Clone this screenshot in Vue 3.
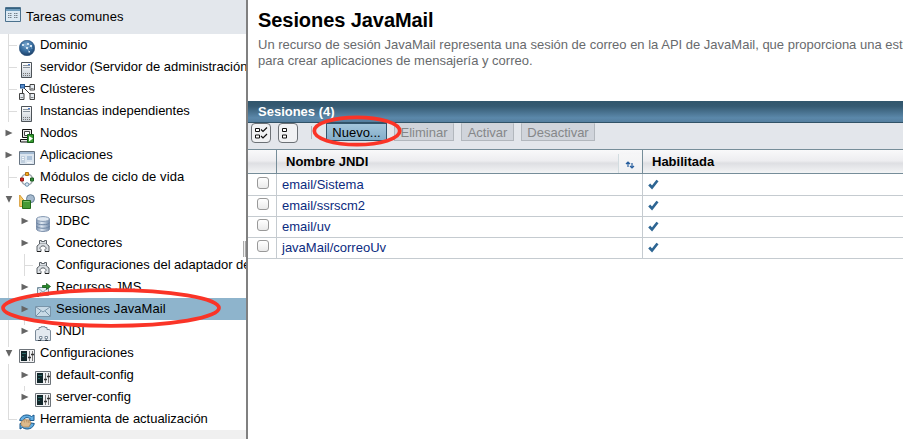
<script setup>
const tree = [
  { label: 'Dominio', icon: 'globe', track: 'tee' },
  { label: 'servidor (Servidor de administración)', icon: 'server', track: 'tee' },
  { label: 'Clústeres', icon: 'cluster', track: 'tee' },
  { label: 'Instancias independientes', icon: 'server', track: 'tee' },
  { label: 'Nodos', icon: 'node', arrow: 'right' },
  { label: 'Aplicaciones', icon: 'apps', arrow: 'right' },
  { label: 'Módulos de ciclo de vida', icon: 'cycle', track: 'tee', wide: true },
  { label: 'Recursos', icon: 'resources', arrow: 'down' },
  { label: 'JDBC', icon: 'database', arrow: 'right', child: true },
  { label: 'Conectores', icon: 'connector', arrow: 'right', child: true },
  { label: 'Configuraciones del adaptador de recursos', icon: 'connector', track: 'tee', child: true },
  { label: 'Recursos JMS', icon: 'jms', arrow: 'right', child: true, wide: true },
  { label: 'Sesiones JavaMail', icon: 'mail', arrow: 'right', child: true, selected: true, wide: true },
  { label: 'JNDI', icon: 'jndi', arrow: 'right', track: 'stub', child: true },
  { label: 'Configuraciones', icon: 'config', arrow: 'down', track: 'stub' },
  { label: 'default-config', icon: 'config', arrow: 'right', child: true },
  { label: 'server-config', icon: 'config', arrow: 'right', track: 'stub', child: true },
  { label: 'Herramienta de actualización', icon: 'update', track: 'end' },
]
const sessions = ['email/Sistema', 'email/ssrscm2', 'email/uv', 'javaMail/correoUv']
</script>

<template>
  <div class="page">
    <svg class="defs" width="0" height="0" aria-hidden="true">
      <defs>
        <radialGradient id="g-globe" cx=".45" cy=".3" r=".7">
          <stop offset="0" stop-color="#79a7cf" /><stop offset=".6" stop-color="#356a9c" /><stop offset="1" stop-color="#1c3f66" />
        </radialGradient>
        <linearGradient id="g-grey" x2="0" y2="1"><stop stop-color="#fff" /><stop offset="1" stop-color="#c5cdd5" /></linearGradient>
        <linearGradient id="g-db"><stop stop-color="#7d93b0" /><stop offset=".4" stop-color="#e0e9f3" /><stop offset="1" stop-color="#7088a8" /></linearGradient>
        <symbol id="i-globe" viewBox="0 0 16 16">
          <circle cx="8" cy="8" r="7.7" fill="url(#g-globe)" stroke="#264d78" stroke-width=".6" />
          <path d="M4 4.8 9 3.8 12 6 8 8.2 10.5 12M8 8.2 4 4.8M12 6l1 3" fill="none" stroke="#8eb6d5" stroke-width=".6" />
          <path d="M3 4h2v2H3zM8 3h2v2H8zM11 5h2v2h-2zM7 7h2v2H7zM9.5 11h1.5v1.5H9.5z" fill="#d3e4f2" />
        </symbol>
        <symbol id="i-server" viewBox="0 0 16 16">
          <path d="M2.5.5h10v15h-10z" fill="url(#g-grey)" stroke="#4d5358" />
          <path d="M4 3.5h7M4 5.5h7" stroke="#87929c" /><path d="M9 2.5h2" stroke="#4d7bd0" />
          <path d="M4 11.5h7M4 13.5h7" stroke="#777" stroke-dasharray="1 1" />
        </symbol>
        <symbol id="i-cluster" viewBox="0 0 16 16">
          <path d="M5 2.5h6M3.5 5v5M5 4l6 6" fill="none" stroke="#333" />
          <rect x="1.5" y=".5" width="4" height="3.5" fill="#588dce" stroke="#24558e" />
          <path d="M11 .5h4.5V6H11zM.5 9.5h4.500v6H.5zM11 9.500h4.500v6H11z" fill="#e7edf3" stroke="#444" />
          <path d="M12 4.5h2.500M1.500 13.500H4M12 13.500h2.500" stroke="#888" />
        </symbol>
        <symbol id="i-node" viewBox="0 0 16 16">
          <path d="M3.5 1.5h9v8h-9zM1.500 11.500h11v2.500h-11z" fill="#e8e8e8" stroke="#111" />
          <path d="M5.500 3.500h5v4h-5z" fill="#fff" stroke="#444" />
          <path d="M8.500 6.500h6v8h-6z" fill="#34992e" stroke="#145a17" />
          <path d="m10 8 4 2.500-4 3z" fill="#fff" />
        </symbol>
        <symbol id="i-apps" viewBox="0 0 16 16">
          <path d="M.5 1.5h15v13H.5z" fill="#dbe5ef" stroke="#687583" /><path d="M1 2h14v2H1z" fill="#a3bad2" />
          <path d="M2 6h4v7H2z" fill="#c0cfde" /><path d="M8 6h5v4H8z" fill="#adc3da" /><path d="M3 7.5h2M3 9.5h2M8 12.5h5" stroke="#f5f8fb" />
        </symbol>
        <symbol id="i-cycle" viewBox="0 0 16 16">
          <circle cx="8" cy="7.5" r="5.5" fill="none" stroke="#a0a6ac" stroke-width="1.4" />
          <path d="M6.500.5h3v3h-3z" fill="#f0ae20" stroke="#b56e10" /><path d="M1.500 6h3v3h-3z" fill="#d72b26" stroke="#9b1c18" />
          <path d="M11.500 6h3v3h-3z" fill="#338a38" stroke="#1f6023" /><circle cx="8" cy="12.500" r="1.800" fill="#dbe9f4" stroke="#6c91ae" />
        </symbol>
        <symbol id="i-resources" viewBox="0 0 16 16">
          <path d="M.7 1v11.5H10z" fill="#f9cf71" stroke="#d49830" /><circle cx="11.5" cy="4.700" r="4" fill="#a6bace" stroke="#657e96" />
          <path d="M3.500 6.500h8v8h-8z" fill="#459b35" stroke="#226b19" /><path d="M4.500 7.500h6" stroke="#79bf67" />
        </symbol>
        <symbol id="i-database" viewBox="0 0 16 16">
          <path d="M1.500 3v10c0 3.300 13 3.300 13 0V3" fill="url(#g-db)" stroke="#8093ad" />
          <ellipse cx="8" cy="3" rx="6.500" ry="2.400" fill="#e0e8f1" stroke="#8296b0" />
          <path d="M1.500 6.500c0 3 13 3 13 0m-13 3.500c0 3 13 3 13 0" fill="none" stroke="#6c84a3" />
        </symbol>
        <symbol id="i-connector" viewBox="0 0 16 16">
          <path d="M4.500 6V2.500h2v1h3v-1h2V6l2.500 2v5.500h-4v-2l1-1c0-3.500-6-3.500-6 0l1 1v2H2V8z" fill="#dce0e4" stroke="#5c6268" />
          <path d="M5 5.500h6" stroke="#aab0b5" /><path d="M2 13.500h4M10 13.500h4" stroke="#222" />
        </symbol>
        <symbol id="i-jms" viewBox="0 0 16 16">
          <path d="M2.500 5.500h11v8h-11z" fill="#e2edf4" stroke="#77909f" /><path d="m3 6 5 4 5-4M3 13l3.500-3.500M13 13 9.500 9.500" fill="none" stroke="#93a9b8" />
          <path d="M7.500 3.500h4v-2l4 3-4 3v-2h-4z" fill="#288c2c" stroke="#155b18" stroke-width=".8" /><path d="M2 14h2" stroke="#278929" stroke-width="2" />
        </symbol>
        <symbol id="i-mail" viewBox="0 0 16 16">
          <path d="M.5 2.500h15v10H.5z" fill="#c8dae7" stroke="#7894a9" /><path d="m1 3 7 5 7-5M1 12l5-5M15 12l-5-5" fill="none" stroke="#7895aa" />
        </symbol>
        <symbol id="i-jndi" viewBox="0 0 16 16">
          <path d="M.5 4.500 2 3.500h2v-2h2V.7h4v.8h2v2h2l1.500 1v10h-4v-2h1v-2h-2.500v2h1v2h-5v-2h1v-2H4.500v2h1v2h-5z" fill="#e3e9ef" stroke="#7b8a98" />
          <path d="M3 14.500h3M10 14.500h3" stroke="#303943" />
        </symbol>
        <symbol id="i-config" viewBox="0 0 16 16">
          <path d="M.5 1.500h15v13H.5z" fill="#f0f1f3" stroke="#6d7379" /><path d="M2 3h6v10H2z" fill="#12262a" />
          <path d="M3 5.500h4M3 8.500h2" stroke="#2b6864" /><path d="M10.500 3v10M13.500 3v10" stroke="#777" /><path d="M9 9.500h3M12 6.500h3" stroke="#333" stroke-width="1.5" />
        </symbol>
        <symbol id="i-update" viewBox="0 0 16 16">
          <path d="M.7 6.500C1.500 1.500 8-.8 12.500 2.500L15 1v5.500H9.500l2-1.500C8.500 2.500 5 3.500 4 7z" fill="#63aee2" stroke="#17578c" />
          <path d="M15.300 9.500c-.8 5-7.300 7.300-11.800 4L1 15V9.500h5.500l-2 1.500c3 2.500 6.500 1.500 7.500-2z" fill="#63aee2" stroke="#17578c" />
          <path d="M2 8 5 5.500l5.500.5 1.500 3-2 4H4.500L2 11z" fill="#dcba8c" stroke="#a27a4f" stroke-width=".7" /><path d="m5 6 .5 2.500m2-2.500.5 2.500m1.500-2 .5 2.500" stroke="#a27a4f" stroke-width=".6" />
        </symbol>
      </defs>
    </svg>

    <aside class="sidebar">
      <header class="common">
        <svg class="common-icon" viewBox="0 0 16 16">
          <path d="M.5.5h15v14H.5z" fill="#dce9f3" stroke="#4b718d" /><path d="M1 1h14v3H1z" fill="#6f9dbd" /><path d="M1 1.500h14" stroke="#35617f" />
          <path d="M3 6.500h4M9 6.500h4M3 8.500h4M9 8.500h4M3 10.500h4M9 10.500h4" stroke="#76838d" stroke-dasharray="1.5 .5" />
        </svg>
        <span>Tareas comunes</span>
      </header>
      <ul class="tree">
        <li v-for="item in tree" :key="item.label" class="row" :class="{ selected: item.selected, wide: item.wide }">
          <span v-if="item.child" class="track line" />
          <span class="track" :class="item.track">
            <svg v-if="item.arrow === 'right'" class="arrow" viewBox="0 0 8 8"><path d="M.5.7 7.500 4 .5 7.300z" /></svg>
            <svg v-if="item.arrow === 'down'" class="arrow" viewBox="0 0 8 8"><path d="M.7 1h6.600L4 7.700z" /></svg>
          </span>
          <svg class="icon"><use :href="'#i-' + item.icon" /></svg>
          <span class="label">{{ item.label }}</span>
        </li>
      </ul>
      <div class="grip" />
    </aside>

    <main class="main">
      <h1>Sesiones JavaMail</h1>
      <p class="intro">Un recurso de sesión JavaMail representa una sesión de correo en la API de JavaMail, que proporciona una estructura<br>para crear aplicaciones de mensajería y correo.</p>
      <h2>Sesiones (4)</h2>
      <div class="toolbar">
        <svg class="tool" viewBox="0 0 20 20">
          <rect x=".5" y=".5" width="19" height="19" rx="3.5" fill="#f1f2f4" stroke="#6c7176" />
          <path d="M4.500 5.500h4v3h-4zM4.500 12h4v3h-4z" fill="#fff" stroke="#111" /><path d="m10 6.500 2 2 4-4M10 13l2 2 4-4" fill="none" stroke="#111" stroke-width="1.2" />
        </svg>
        <svg class="tool" viewBox="0 0 20 20">
          <rect x=".5" y=".5" width="19" height="19" rx="3.5" fill="#f1f2f4" stroke="#6c7176" />
          <path d="M4.500 5.500h4v3h-4zM4.500 12h4v3h-4z" fill="#fff" stroke="#111" />
        </svg>
        <span class="divider" />
        <button class="btn primary">Nuevo...</button>
        <button class="btn delete" disabled>Eliminar</button>
        <button class="btn enable" disabled>Activar</button>
        <button class="btn disable" disabled>Desactivar</button>
      </div>
      <div class="grid head">
        <span /><span class="name-head">Nombre JNDI
          <span class="sort"><svg viewBox="0 0 10 8"><path d="M3 6V1M1 3l2-2 2 2M7 2v5M5 5l2 2 2-2" fill="none" stroke="#285f9e" stroke-width="1.2" /></svg></span>
        </span><span class="enabled-head">Habilitada</span>
      </div>
      <div v-for="name in sessions" :key="name" class="grid data">
        <span class="check-cell"><input type="checkbox" :aria-label="name"></span>
        <a>{{ name }}</a>
        <span class="tick"><svg viewBox="0 0 11 11"><path d="m1.200 5.500 2.800 3L9.500 1.500" fill="none" stroke="#2d6593" stroke-width="2.7" /></svg></span>
      </div>
    </main>
    <svg class="mark mark-tree" viewBox="0 0 222 42"><ellipse cx="111" cy="21" rx="108" ry="17.8" /></svg>
    <svg class="mark mark-new" viewBox="0 0 92 34"><ellipse cx="46" cy="17" rx="42.7" ry="13.7" /></svg>
  </div>
</template>

<style>
body { overflow: hidden; }
</style>
<style scoped>
* { box-sizing: border-box; }
.page { position: relative; display: flex; width: 903px; height: 439px; overflow: hidden; background: #fff; font: 13px/16px "Liberation Sans", Arial, sans-serif; color: #000; }
.defs { position: absolute; }
.sidebar { position: relative; width: 248px; flex: none; border-right: 2px solid #808080; background: #f0f0f0; overflow: hidden; }
.common { height: 34px; display: flex; align-items: flex-start; padding: 7px 0 0 5px; gap: 5px; background: #e3e7ec; letter-spacing: .17px; }
.common span { padding-top: 2px; }
.common-icon { width: 16px; height: 16px; }
.tree { margin: 0; padding: 0; list-style: none; background: #fff; }
.row { height: 22px; display: flex; padding-left: 1px; white-space: nowrap; }
.selected { background: #8eb4cc; }
.track { width: 16px; flex: none; position: relative; }
.track + .icon { margin-left: 2px; }
.tee::before, .line::before { content: ""; position: absolute; left: 7px; top: 0; height: 22px; border-left: 1px solid #dcdcdc; }
.selected .line::before { display: none; }
.stub::before { content: ""; position: absolute; left: 7px; top: 0; height: 5px; border-left: 1px solid #dcdcdc; }
.end::before { content: ""; position: absolute; left: 7px; top: 0; height: 11px; border-left: 1px solid #dcdcdc; }
.tee::after, .end::after { content: ""; position: absolute; left: 7px; top: 11px; width: 9px; border-top: 1px solid #dcdcdc; }
.arrow { display: block; width: 8px; height: 8px; margin: 7px 0 0 4px; fill: #656565; }
.icon { width: 16px; height: 16px; margin-top: 6px; flex: none; }
.label { padding: 3px 0 0 5px; letter-spacing: -.02px; }
.wide .label { letter-spacing: .08px; }
.grip { position: absolute; left: 243px; top: 241px; width: 3px; height: 16px; border-left: 1px solid #aaa; border-right: 1px solid #aaa; background: #eee; }
.main { width: 655px; flex: none; white-space: nowrap; }
h1 { margin: 0; padding: 7px 0 0 10px; height: 36px; font-size: 20px; line-height: 26px; letter-spacing: -.07px; }
.intro { height: 65px; margin: 0; padding: 1px 0 0 10px; line-height: 16px; color: #686a6d; }
h2 { margin: 0; height: 22px; padding-left: 10px; border-bottom: 1px solid #315267; background: linear-gradient(#31566c, #355a72 25%, #5b88aa 80%, #557f9f); color: #fff; font-size: 13px; line-height: 21px; }
.toolbar { height: 26px; display: flex; padding-left: 3px; background: #e3e6eb; }
.tool { width: 20px; height: 20px; margin-right: 7px; }
.divider { width: 1px; height: 13px; margin: 3px 14px 0 6px; background: #b0b6bd; }
.btn { height: 18px; margin: 0 7px 0 0; padding: 0; border: 1px solid #b2b7bd; border-top-color: #d0d3d7; background: #d0d4db; color: #858789; font: 13px/15px "Liberation Sans", Arial, sans-serif; }
.primary { width: 61px; border-color: #32556d; background: linear-gradient(#a4c6dc, #83adc9); color: #000; }
.delete { width: 60px; }
.enable { width: 53px; }
.disable { width: 74px; }
.grid { display: grid; grid-template-columns: 29px 366px 1fr; height: 21px; }
.grid > * { border-right: 1px solid #c5cbd0; border-bottom: 1px solid #c5cbd0; }
.grid > *:last-child { border-right: 0; }
.head { height: 25px; border-top: 1px solid #768d99; background: linear-gradient(#f9f9fa, #ededf0 45%, #dedfe3 55%, #f5f6f7); font-weight: bold; line-height: 23px; }
.head > * { border-color: #768d99; }
.name-head { display: flex; justify-content: space-between; padding-left: 9px; }
.sort { display: flex; width: 24px; height: 19px; margin-top: 4px; padding: 7px 0 0 6px; border-left: 1px solid #d2dce0; background: linear-gradient(#f6f6f7, #f0f1f3); }
.sort svg { width: 10px; height: 8px; }
.enabled-head { padding-left: 9px; }
.data a { padding-left: 5px; line-height: 21px; color: #0b2b80; }
.check-cell { display: flex; padding: 3px 0 0 9px; }
input { appearance: none; width: 12px; height: 12px; margin: 0; border: 1px solid #999; border-radius: 3px; background: linear-gradient(#fff, #eaeaea); }
.tick { display: flex; padding: 5px 0 0 5px; }
.tick svg { width: 11px; height: 11px; }
.mark { position: absolute; fill: none; stroke: #fa3427; stroke-width: 3.7px; }
.mark-tree { left: 0; top: 287px; width: 222px; height: 42px; }
.mark-new { left: 311px; top: 114px; width: 92px; height: 34px; }
</style>
